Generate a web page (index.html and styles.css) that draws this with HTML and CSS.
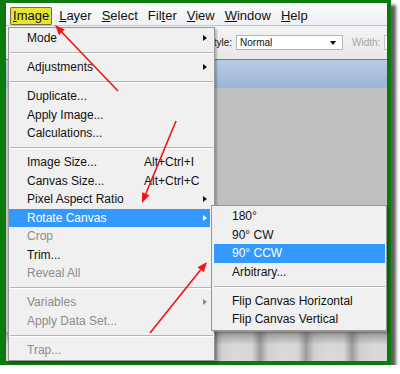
FILE: index.html
```html
<!DOCTYPE html>
<html lang="en">
<head>
<meta charset="UTF-8">
<meta name="viewport" content="width=device-width, initial-scale=1.0">
<title>Image Menu - Rotate Canvas</title>
<link rel="stylesheet" href="styles.css">
</head>
<body>
<div class="frame">
    <div class="app">
        <div class="menubar">
            <span class="mb-item active"><u>I</u>mage</span>
            <span class="mb-item"><u>L</u>ayer</span>
            <span class="mb-item"><u>S</u>elect</span>
            <span class="mb-item">Fil<u>t</u>er</span>
            <span class="mb-item"><u>V</u>iew</span>
            <span class="mb-item"><u>W</u>indow</span>
            <span class="mb-item"><u>H</u>elp</span>
        </div>
        <div class="toolbar">
            <span class="tb-label">Style:</span>
            <div class="tb-select"><span>Normal</span><i class="tb-caret"></i></div>
            <span class="tb-label off">Width:</span>
            <div class="tb-input"></div>
        </div>
        <div class="docbar"></div>
        <div class="canvas"></div>
        <div class="strip"></div>
    </div>

    <!-- Image menu -->
    <div class="menu main-menu">
        <div class="row"><span>Mode</span><i class="arr"></i></div>
        <div class="sep"></div>
        <div class="row"><span>Adjustments</span><i class="arr"></i></div>
        <div class="sep"></div>
        <div class="row"><span>Duplicate...</span></div>
        <div class="row"><span>Apply Image...</span></div>
        <div class="row"><span>Calculations...</span></div>
        <div class="sep"></div>
        <div class="row"><span>Image Size...</span><span class="key">Alt+Ctrl+I</span></div>
        <div class="row"><span>Canvas Size...</span><span class="key">Alt+Ctrl+C</span></div>
        <div class="row"><span>Pixel Aspect Ratio</span><i class="arr"></i></div>
        <div class="row hot"><span>Rotate Canvas</span><i class="arr"></i></div>
        <div class="row off"><span>Crop</span></div>
        <div class="row"><span>Trim...</span></div>
        <div class="row off"><span>Reveal All</span></div>
        <div class="sep"></div>
        <div class="row off"><span>Variables</span><i class="arr"></i></div>
        <div class="row off"><span>Apply Data Set...</span></div>
        <div class="sep"></div>
        <div class="row off"><span>Trap...</span></div>
    </div>

    <!-- Rotate Canvas submenu -->
    <div class="menu sub-menu">
        <div class="row"><span>180°</span></div>
        <div class="row"><span>90° CW</span></div>
        <div class="row hot"><span>90° CCW</span></div>
        <div class="row"><span>Arbitrary...</span></div>
        <div class="sep"></div>
        <div class="row"><span>Flip Canvas Horizontal</span></div>
        <div class="row"><span>Flip Canvas Vertical</span></div>
    </div>
</div>

<svg class="marks" width="400" height="374" viewBox="0 0 400 374">
    <g stroke="#f01414" stroke-width="1.6" fill="none">
        <line x1="118" y1="91" x2="61.9" y2="32.2"/>
        <line x1="176" y1="121" x2="145.8" y2="193.8"/>
        <line x1="150" y1="333" x2="200.7" y2="269.8"/>
    </g>
    <g fill="#f01414">
        <polygon points="55,25 64.8,29.5 59,35"/>
        <polygon points="142,203 142.1,192.3 149.5,195.3"/>
        <polygon points="207,262 203.8,272.3 197.6,267.3"/>
    </g>
</svg>
</body>
</html>
```

FILE: styles.css
```css
body {
    margin: 0;
    background: #fff;
    font-family: "Liberation Sans", Arial, sans-serif;
    color: #111;
}
.frame {
    position: relative;
    width: 391px;
    height: 365px;
    box-sizing: border-box;
    border: 3px solid #0d7a0d;
    border-left-width: 5px;
    box-shadow: 5px 5px 3px rgba(40, 40, 40, 0.75);
}
.app {
    height: 100%;
    box-sizing: border-box;
    border: 1px solid #4a4a4a;
    border-top: none;
    display: flex;
    flex-direction: column;
    overflow: hidden;
}
.menubar {
    height: 22px;
    flex: none;
    border-bottom: 1px solid #c2c4c8;
    background: linear-gradient(to bottom, #fbfbfc, #eef0f4);
    display: flex;
    align-items: flex-end;
    gap: 4px;
    padding-left: 4px;
    font-size: 13px;
}
.mb-item {
    padding: 0 3px;
    height: 18px;
    line-height: 18px;
    white-space: nowrap;
}
.mb-item.active {
    background: #e4e437;
    border-radius: 2px;
    box-shadow: inset 0 0 0 1px #6f6f40;
}
.toolbar {
    height: 33px;
    flex: none;
    border-bottom: 1px solid #7c7c7c;
    background: linear-gradient(to bottom, #f4f4f4, #e8e8e8);
    display: flex;
    align-items: center;
    padding-left: 201px;
    font-size: 10px;
    white-space: nowrap;
}
.tb-label.off {
    color: #a5a5a5;
    margin-left: 9px;
}
.tb-select {
    margin-left: 4px;
    width: 107px;
    height: 15px;
    flex: none;
    box-sizing: border-box;
    border: 1px solid #b4b6bb;
    background: #fff;
    display: flex;
    align-items: center;
    justify-content: space-between;
    padding: 0 6px 0 3px;
    font-size: 10px;
}
.tb-caret {
    width: 0;
    height: 0;
    border-top: 4px solid #111;
    border-left: 3.5px solid transparent;
    border-right: 3.5px solid transparent;
}
.tb-input {
    margin-left: 4px;
    width: 20px;
    height: 15px;
    flex: none;
    box-sizing: border-box;
    border: 1px solid #c4c4c4;
    background: #fff;
}
.docbar {
    height: 28px;
    flex: none;
    background: linear-gradient(to bottom, #b9cce5, #9bb5d7);
}
.canvas {
    flex: 1;
    background: #c0c0c0;
}
.strip {
    height: 29px;
    flex: none;
    background:
        linear-gradient(to bottom, rgba(70, 70, 70, 0.45), rgba(70, 70, 70, 0) 45%),
        repeating-linear-gradient(90deg, #dadada 0, #d6d6d6 16px, #9c9c9c 24px, #d0d0d0 32px, #dadada 46px);
}

/* menus */
.menu {
    position: absolute;
    box-sizing: border-box;
    background: #f0f0f0;
    border: 1px solid #979797;
    font-size: 12px;
    box-shadow: 2px 2px 2px rgba(0, 0, 0, 0.25);
}
.main-menu {
    left: 3px;
    top: 24px;
    width: 207px;
    padding: 1px 4px 1px 0;
}
.sub-menu {
    left: 206px;
    top: 202px;
    width: 176px;
    padding: 1px;
}
.row {
    height: 18.5px;
    line-height: 18.5px;
    padding-left: 18px;
    display: grid;
    grid-template-columns: 1fr 56px 10px;
    align-items: center;
    white-space: nowrap;
}
.sub-menu .row {
    padding-left: 18px;
    margin-left: 1px;
}
.key {
    grid-column: 2;
}
.arr {
    grid-column: 3;
    margin-left: 3px;
    width: 0;
    height: 0;
    border-left: 4px solid #111;
    border-top: 3.5px solid transparent;
    border-bottom: 3.5px solid transparent;
}
.row.off {
    color: #8c8c8c;
}
.row.off .arr {
    border-left-color: #8c8c8c;
}
.row.hot {
    background: #3399ff;
    color: #fff;
}
.row.hot .arr {
    border-left-color: #fff;
}
.sep {
    height: 10.5px;
    position: relative;
}
.sep::before {
    content: "";
    position: absolute;
    left: 1px;
    right: -3px;
    top: 4.5px;
    height: 1px;
    background: #b4b4b4;
    border-bottom: 1px solid #fff;
}
.sub-menu .sep::before {
    right: 0;
}
.marks {
    position: absolute;
    left: 0;
    top: 0;
    pointer-events: none;
}
```
